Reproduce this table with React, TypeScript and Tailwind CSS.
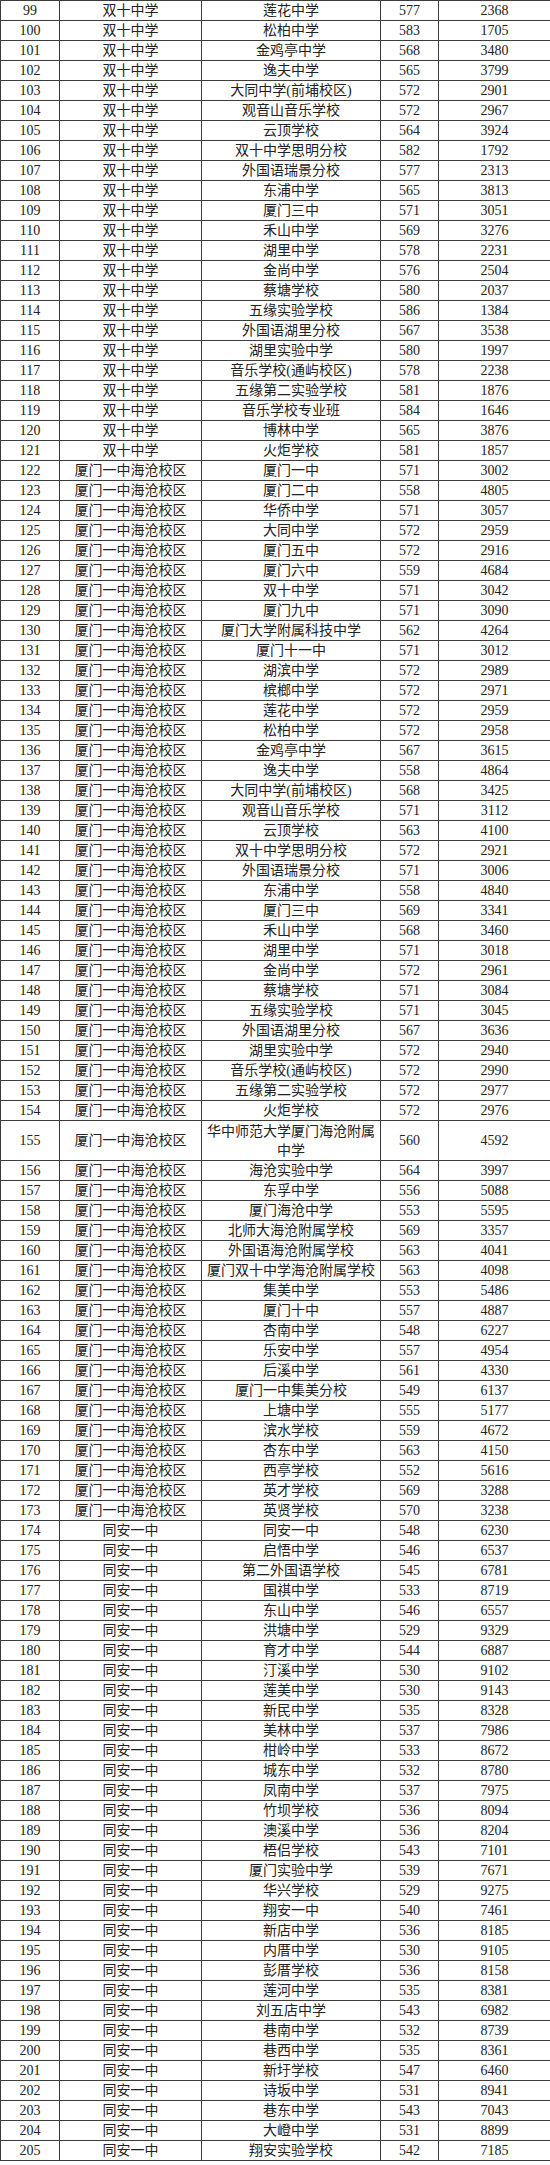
type Row = [number, string, string, number, number];

const A = "双十中学";
const B = "厦门一中海沧校区";
const C = "同安一中";

const ROWS: Row[] = [
  [99, A, "莲花中学", 577, 2368],
  [100, A, "松柏中学", 583, 1705],
  [101, A, "金鸡亭中学", 568, 3480],
  [102, A, "逸夫中学", 565, 3799],
  [103, A, "大同中学(前埔校区)", 572, 2901],
  [104, A, "观音山音乐学校", 572, 2967],
  [105, A, "云顶学校", 564, 3924],
  [106, A, "双十中学思明分校", 582, 1792],
  [107, A, "外国语瑞景分校", 577, 2313],
  [108, A, "东浦中学", 565, 3813],
  [109, A, "厦门三中", 571, 3051],
  [110, A, "禾山中学", 569, 3276],
  [111, A, "湖里中学", 578, 2231],
  [112, A, "金尚中学", 576, 2504],
  [113, A, "蔡塘学校", 580, 2037],
  [114, A, "五缘实验学校", 586, 1384],
  [115, A, "外国语湖里分校", 567, 3538],
  [116, A, "湖里实验中学", 580, 1997],
  [117, A, "音乐学校(通屿校区)", 578, 2238],
  [118, A, "五缘第二实验学校", 581, 1876],
  [119, A, "音乐学校专业班", 584, 1646],
  [120, A, "博林中学", 565, 3876],
  [121, A, "火炬学校", 581, 1857],
  [122, B, "厦门一中", 571, 3002],
  [123, B, "厦门二中", 558, 4805],
  [124, B, "华侨中学", 571, 3057],
  [125, B, "大同中学", 572, 2959],
  [126, B, "厦门五中", 572, 2916],
  [127, B, "厦门六中", 559, 4684],
  [128, B, "双十中学", 571, 3042],
  [129, B, "厦门九中", 571, 3090],
  [130, B, "厦门大学附属科技中学", 562, 4264],
  [131, B, "厦门十一中", 571, 3012],
  [132, B, "湖滨中学", 572, 2989],
  [133, B, "槟榔中学", 572, 2971],
  [134, B, "莲花中学", 572, 2959],
  [135, B, "松柏中学", 572, 2958],
  [136, B, "金鸡亭中学", 567, 3615],
  [137, B, "逸夫中学", 558, 4864],
  [138, B, "大同中学(前埔校区)", 568, 3425],
  [139, B, "观音山音乐学校", 571, 3112],
  [140, B, "云顶学校", 563, 4100],
  [141, B, "双十中学思明分校", 572, 2921],
  [142, B, "外国语瑞景分校", 571, 3006],
  [143, B, "东浦中学", 558, 4840],
  [144, B, "厦门三中", 569, 3341],
  [145, B, "禾山中学", 568, 3460],
  [146, B, "湖里中学", 571, 3018],
  [147, B, "金尚中学", 572, 2961],
  [148, B, "蔡塘学校", 571, 3084],
  [149, B, "五缘实验学校", 571, 3045],
  [150, B, "外国语湖里分校", 567, 3636],
  [151, B, "湖里实验中学", 572, 2940],
  [152, B, "音乐学校(通屿校区)", 572, 2990],
  [153, B, "五缘第二实验学校", 572, 2977],
  [154, B, "火炬学校", 572, 2976],
  [155, B, "华中师范大学厦门海沧附属中学", 560, 4592],
  [156, B, "海沧实验中学", 564, 3997],
  [157, B, "东孚中学", 556, 5088],
  [158, B, "厦门海沧中学", 553, 5595],
  [159, B, "北师大海沧附属学校", 569, 3357],
  [160, B, "外国语海沧附属学校", 563, 4041],
  [161, B, "厦门双十中学海沧附属学校", 563, 4098],
  [162, B, "集美中学", 553, 5486],
  [163, B, "厦门十中", 557, 4887],
  [164, B, "杏南中学", 548, 6227],
  [165, B, "乐安中学", 557, 4954],
  [166, B, "后溪中学", 561, 4330],
  [167, B, "厦门一中集美分校", 549, 6137],
  [168, B, "上塘中学", 555, 5177],
  [169, B, "滨水学校", 559, 4672],
  [170, B, "杏东中学", 563, 4150],
  [171, B, "西亭学校", 552, 5616],
  [172, B, "英才学校", 569, 3288],
  [173, B, "英贤学校", 570, 3238],
  [174, C, "同安一中", 548, 6230],
  [175, C, "启悟中学", 546, 6537],
  [176, C, "第二外国语学校", 545, 6781],
  [177, C, "国祺中学", 533, 8719],
  [178, C, "东山中学", 546, 6557],
  [179, C, "洪塘中学", 529, 9329],
  [180, C, "育才中学", 544, 6887],
  [181, C, "汀溪中学", 530, 9102],
  [182, C, "莲美中学", 530, 9143],
  [183, C, "新民中学", 535, 8328],
  [184, C, "美林中学", 537, 7986],
  [185, C, "柑岭中学", 533, 8672],
  [186, C, "城东中学", 532, 8780],
  [187, C, "凤南中学", 537, 7975],
  [188, C, "竹坝学校", 536, 8094],
  [189, C, "澳溪中学", 536, 8204],
  [190, C, "梧侣学校", 543, 7101],
  [191, C, "厦门实验中学", 539, 7671],
  [192, C, "华兴学校", 529, 9275],
  [193, C, "翔安一中", 540, 7461],
  [194, C, "新店中学", 536, 8185],
  [195, C, "内厝中学", 530, 9105],
  [196, C, "彭厝学校", 536, 8158],
  [197, C, "莲河中学", 535, 8381],
  [198, C, "刘五店中学", 543, 6982],
  [199, C, "巷南中学", 532, 8739],
  [200, C, "巷西中学", 535, 8361],
  [201, C, "新圩学校", 547, 6460],
  [202, C, "诗坂中学", 531, 8941],
  [203, C, "巷东中学", 543, 7043],
  [204, C, "大嶝中学", 531, 8899],
  [205, C, "翔安实验学校", 542, 7185],
];

const cell = "border border-[#3c3c3c] p-0 text-center align-middle";

export default function App() {
  return (
    <div className="w-[550px] bg-white text-[#222] font-['Liberation_Serif','Noto_Sans_CJK_SC',serif] text-[14px] leading-none">
      <table className="w-[550px] table-fixed border-collapse">
        <colgroup>
          <col className="w-[59px]" />
          <col className="w-[142px]" />
          <col className="w-[179px]" />
          <col className="w-[58px]" />
          <col className="w-[112px]" />
        </colgroup>
        <tbody>
          {ROWS.map(([n, from, school, score, rank]) => {
            const tall = n === 155;
            return (
              <tr key={n} className={tall ? "h-[40px]" : "h-[20px]"}>
                <td className={cell}>{n}</td>
                <td className={cell}>{from}</td>
                <td className={`${cell} ${tall ? "leading-[19px]" : ""}`}>
                  {tall ? (
                    <>
                      华中师范大学厦门海沧附属
                      <br />
                      中学
                    </>
                  ) : (
                    school
                  )}
                </td>
                <td className={cell}>{score}</td>
                <td className={cell}>{rank}</td>
              </tr>
            );
          })}
        </tbody>
      </table>
    </div>
  );
}
